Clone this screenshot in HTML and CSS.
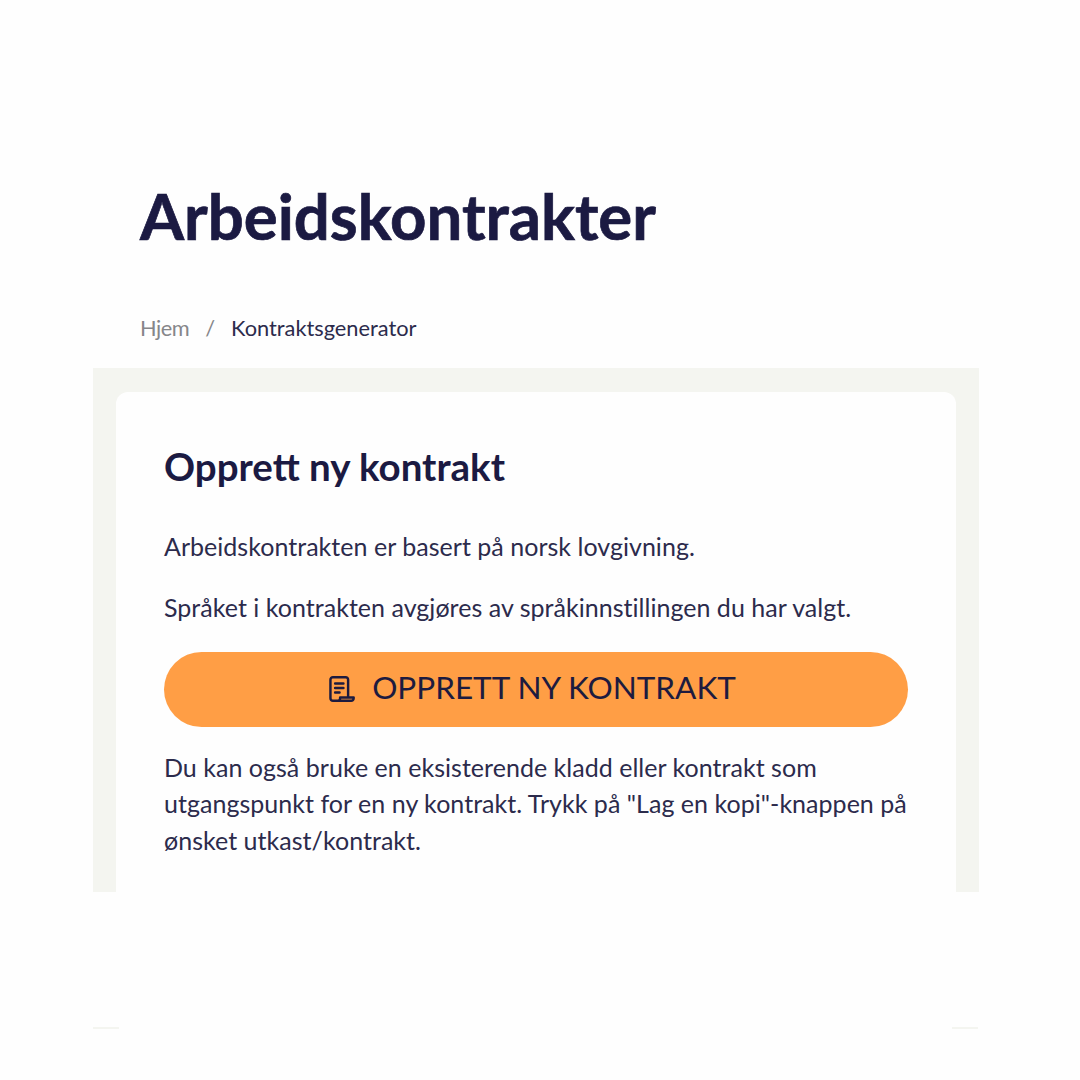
FILE: index.html
```html
<html>
  <head>
    <title>Arbeidskontrakter</title>
    <link rel="stylesheet" href="styles.css">
  </head>

  <body>
    <div class="page">
      <h1 class="title">Arbeidskontrakter</h1>

      <div class="breadcrumb">
        <span class="crumb-link">Hjem</span>
        <span class="crumb-sep">/</span>
        <span class="crumb-current">Kontraktsgenerator</span>
      </div>

      <div class="panel">
        <div class="card">
          <h2 class="card-title">Opprett ny kontrakt</h2>
          <p class="text">Arbeidskontrakten er basert på norsk lovgivning.</p>
          <p class="text">Språket i kontrakten avgjøres av språkinnstillingen du har valgt.</p>

          <div class="button">
            <svg class="button-icon" viewBox="1.6 1.2 23.2 23.4" fill="none" stroke="#1d1b3f" stroke-width="2.2" stroke-linejoin="round" stroke-linecap="round">
              <path d="M5 23.5H21.5a2.2 2.2 0 0 0 2.2-2.2v-.8H11.5v.8a2.2 2.2 0 0 1-2.2 2.2H5a2.2 2.2 0 0 1-2.2-2.2V4.5A2.2 2.2 0 0 1 5 2.3h11.5a2.2 2.2 0 0 1 2.2 2.2v16"/>
              <path d="M7 8h7.5M7 12h7.5M7 16h4"/>
            </svg>
            <span class="button-label">OPPRETT NY KONTRAKT</span>
          </div>

          <p class="text note">Du kan også bruke en eksisterende kladd eller kontrakt som utgangspunkt for en ny kontrakt. Trykk på "Lag en kopi"-knappen på ønsket utkast/kontrakt.</p>
        </div>
      </div>

      <div class="ticks">
        <div class="tick"></div>
        <div class="tick"></div>
      </div>
    </div>
  </body>
</html>
```

FILE: styles.css
```css
*, *:before, *:after {
  box-sizing: border-box;
  padding: 0;
  margin: 0;
}

body {
  background-color: #fefefe;
  color: #1d1b3f;
  font-family: "Lato", "Liberation Sans", sans-serif;
}

.page {
  width: 1080px;
  height: 1080px;
  padding: 176px 101px 0 93px;
  overflow: hidden;
}

.title {
  margin-left: 47px;
  font-size: 63.5px;
  line-height: 80px;
  font-weight: 700;
  color: #1b1a42;
  -webkit-text-stroke: 0.7px #1b1a42;
}

.breadcrumb {
  display: flex;
  align-items: center;
  gap: 16px;
  margin: 51px 0 21px 47px;
  height: 40px;
  font-size: 21.8px;
}

.crumb-link {
  color: #86868a;
  letter-spacing: -0.5px;
}

.crumb-sep {
  color: #86868a;
}

.crumb-current {
  color: #2c2b4c;
}

.panel {
  height: 524px;
  padding: 24px 23px 0;
  background-color: #f4f5f0;
}

.card {
  height: 500px;
  padding: 50px 48px 0;
  background-color: #fefefe;
  border-radius: 12px 12px 0 0;
}

.card-title {
  font-size: 38.5px;
  line-height: 48px;
  font-weight: 700;
  color: #1b1a42;
  margin-bottom: 38px;
}

.text {
  font-size: 25px;
  line-height: 36.5px;
  letter-spacing: 0.03px;
  color: #2c2b4c;
  margin-bottom: 24.5px;
}

.button {
  display: flex;
  align-items: center;
  justify-content: center;
  gap: 17px;
  height: 75px;
  margin: 26px 0 22px;
  padding-right: 7px;
  border-radius: 38px;
  background-color: #ff9e45;
  font-size: 31.5px;
  color: #1d1b3f;
}

.button-label {
  padding-bottom: 5px;
}

.button-icon {
  width: 26px;
  height: 26px;
}

.note {
  margin-right: -6px;
}

.ticks {
  display: flex;
  justify-content: space-between;
  margin-top: 135px;
  padding: 0 1px 0 0;
}

.tick {
  width: 26px;
  height: 2px;
  background-color: #f4f5f0;
}
```
